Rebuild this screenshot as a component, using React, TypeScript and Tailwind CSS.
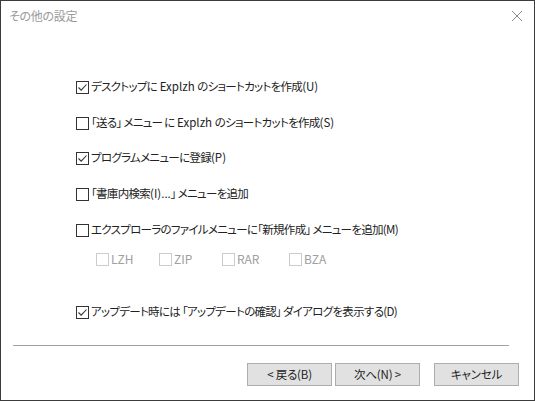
import React from "react";

const font = "font-['Noto_Sans_CJK_JP','Noto_Sans',sans-serif] [font-feature-settings:'palt']";

function Box({ checked, disabled }: { checked?: boolean; disabled?: boolean }) {
  return (
    <span
      className={`flex h-[13px] w-[13px] shrink-0 items-center justify-center border bg-white ${
        disabled ? "border-[#cccccc]" : "border-[#333333]"
      }`}
    >
      {checked && (
        <svg width="11" height="11" viewBox="0 0 11 11">
          <path d="M1.5 5.5 L4.2 8.2 L9.5 2.5" fill="none" stroke="#333" strokeWidth="1.1" />
        </svg>
      )}
    </span>
  );
}

function Row({ checked, label, className }: { checked?: boolean; label: React.ReactNode; className: string }) {
  return (
    <div className={`flex h-[20px] items-center ${className}`}>
      <Box checked={checked} />
      <span className="ml-[2px] text-[11.5px] tracking-[-0.7px] leading-none text-[#222222] whitespace-nowrap">{label}</span>
    </div>
  );
}

function L({ children }: { children: React.ReactNode }) {
  return <span className="tracking-[0px]">{children}</span>;
}

function Sub({ label, className }: { label: string; className: string }) {
  return (
    <div className={`flex items-center ${className}`}>
      <Box disabled />
      <span className="ml-[2px] text-[12px] leading-none text-[#a0a0a0]">{label}</span>
    </div>
  );
}

function Btn({ label, className }: { label: string; className?: string }) {
  return (
    <div
      className={`flex h-[23px] w-[85px] items-center justify-center border border-[#adadad] bg-[#e1e1e1] text-[11.5px] tracking-[-0.2px] leading-none text-[#222222] ${className ?? ""}`}
    >
      {label}
    </div>
  );
}

export default function App() {
  return (
    <div className={`flex h-[401px] w-[535px] flex-col border border-[#3c3c3c] bg-white ${font}`}>
      <div className="flex h-[30px] shrink-0 items-center justify-between pl-[8px] pr-[9px]">
        <span className="text-[12px] tracking-[-0.3px] leading-none text-[#9a9a9a]">その他の設定</span>
        <svg width="12" height="12" viewBox="0 0 12 12" className="mr-[2px]">
          <path d="M1 1 L11 11 M11 1 L1 11" stroke="#8a8a8a" strokeWidth="1" />
        </svg>
      </div>
      <div className="flex flex-col pl-[75px]">
        <Row checked label={<>デスクトップに<L> Explzh </L>のショートカットを作成<L>(U)</L></>} className="mt-[46px]" />
        <Row label={<>「送る」 メニュー に<L> Explzh </L>のショートカットを作成<L>(S)</L></>} className="mt-[16px]" />
        <Row checked label={<>プログラムメニューに登録<L>(P)</L></>} className="mt-[15px]" />
        <Row label={<>「書庫内検索<L>(I)...</L>」 メニューを追加</>} className="mt-[16px]" />
        <Row label="エクスプローラのファイルメニューに「新規作成」 メニューを追加(M)" className="mt-[16px]" />
        <div className="mt-[9px] flex h-[20px] items-center pl-[20px]">
          <Sub label="LZH" className="w-[63px]" />
          <Sub label="ZIP" className="w-[63px]" />
          <Sub label="RAR" className="w-[67px]" />
          <Sub label="BZA" className="" />
        </div>
        <Row checked label="アップデート時には 「アップデートの確認」 ダイアログを表示する(D)" className="mt-[33px]" />
      </div>
      <div className="mx-[12px] mt-[23px] h-[1px] w-[496px] bg-[#a0a0a0]" />
      <div className="mt-[17px] flex pl-[246px]">
        <Btn label="< 戻る(B)" />
        <Btn label="次へ(N) >" className="ml-[3px]" />
        <Btn label="キャンセル" className="ml-[14px]" />
      </div>
    </div>
  );
}
